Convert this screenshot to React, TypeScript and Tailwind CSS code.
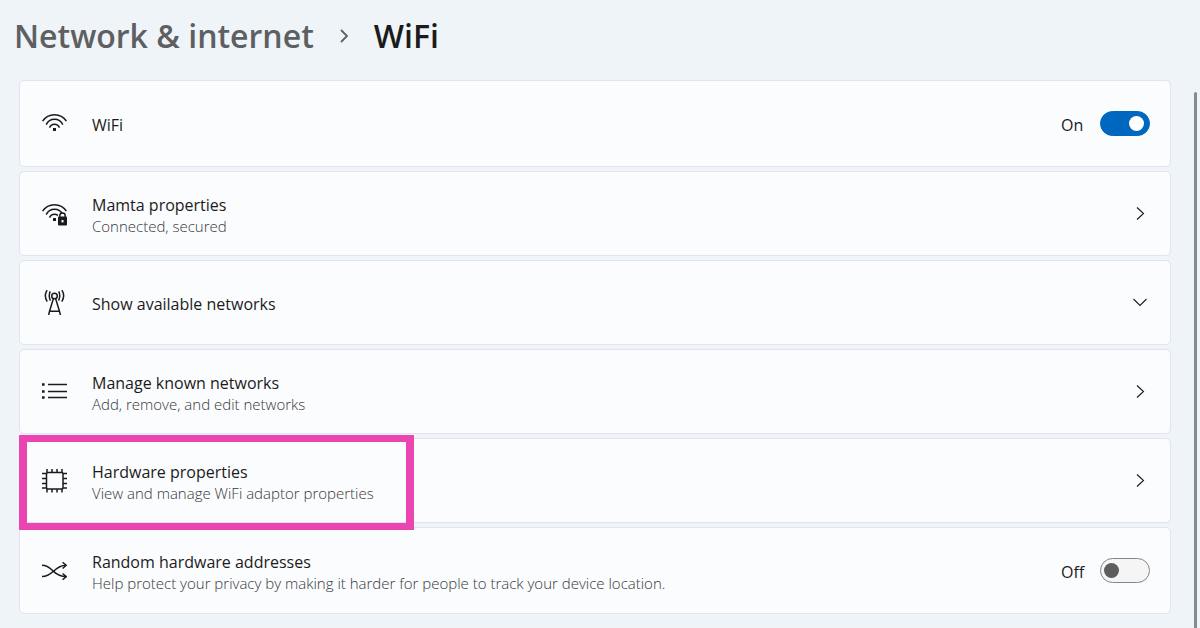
import React from 'react'
import type { ReactNode } from 'react'

const cardClass =
  'relative flex w-full items-center rounded-[5px] border border-[#e1e4eb] bg-[#fbfcfe] pl-[22px] pr-5 text-left'

function Icon({ children }: { children: ReactNode }) {
  return (
    <svg
      className="h-[25px] w-[25px] shrink-0"
      viewBox="0 0 25 25"
      fill="none"
      stroke="#1b1b1b"
      strokeWidth="1.5"
      aria-hidden="true"
    >
      {children}
    </svg>
  )
}

function WifiArcs() {
  return (
    <>
      <path d="M.6 10.2A14.2 14.2 0 0 1 24.4 10.2" />
      <path d="M4.2 13.6A9.2 9.2 0 0 1 20.8 13.6" />
      <path d="M7.5 16.6A5.4 5.4 0 0 1 17.5 16.6" />
      <rect x="11" y="17" width="3" height="3" fill="#1b1b1b" stroke="none" />
    </>
  )
}

function WifiIcon() {
  return (
    <Icon>
      <WifiArcs />
    </Icon>
  )
}

function WifiLockIcon() {
  return (
    <Icon>
      <WifiArcs />
      <path d="M15 25V16.5L17 12.5H23L25 16.5V25Z" fill="#fbfcfe" stroke="none" />
      <path d="M17.8 16V14.8A2.7 2.7 0 0 1 23.2 14.8V16" />
      <rect x="16" y="15.5" width="9" height="9" rx="1" fill="#1b1b1b" stroke="none" />
      <rect x="19.5" y="19" width="2" height="2.4" fill="#fbfcfe" stroke="none" />
    </Icon>
  )
}

function TowerIcon() {
  return (
    <Icon>
      <circle cx="12.5" cy="6" r="2.8" />
      <path d="M11.4 8.6L7.6 21L6.6 25M13.6 8.6L17.4 21L18.4 25M7.4 21.2H17.6" />
      <path d="M8.2 1.4Q6.2 6 8.4 10.6M16.8 1.4Q18.8 6 16.6 10.6" />
      <path d="M5.1.2Q1.5 5.8 5.2 11.6M19.9.2Q23.5 5.8 19.8 11.6" />
    </Icon>
  )
}

function ListIcon() {
  return (
    <Icon>
      <path d="M6 5.5H25M6 12.5H25M6 18.5H25" />
      <path d="M0 5.5H2.6M0 12.5H2.6M0 18.5H2.6" strokeWidth="2.4" />
    </Icon>
  )
}

function ChipIcon() {
  return (
    <Icon>
      <rect x="4.5" y="4.5" width="16.5" height="16.5" rx="1.5" />
      <path d="M5 4.5V1M10 4.5V1M15 4.5V1M20 4.5V1M5 21V24.5M10 21V24.5M15 21V24.5M20 21V24.5" />
      <path d="M4.5 5.5H0M4.5 10.5H0M4.5 15.5H0M4.5 20H0M21 5.5H25M21 10.5H25M21 15.5H25M21 20H25" />
    </Icon>
  )
}

function ShuffleIcon() {
  return (
    <Icon>
      <path d="M0 7.3C6 7.3 8.5 10.6 11.5 13.4S18 18.6 24 18.6" />
      <path d="M0 18.6C6 18.6 8.5 16 11.5 13.2S18 7.3 24 7.3" />
      <path d="M20.6 4.2L24.2 7.3L20.6 10.5M20.6 15.5L24.2 18.6L20.6 21.8" />
    </Icon>
  )
}

function Chevron({ down = false }: { down?: boolean }) {
  return (
    <svg
      className="h-5 w-5 shrink-0"
      viewBox="0 0 20 20"
      fill="none"
      stroke="#1b1b1b"
      strokeWidth="1.1"
      aria-hidden="true"
    >
      <path d={down ? 'M3.5 6L10 12.5L16.5 6' : 'M7 3.5L13.5 9.5L7 15.5'} />
    </svg>
  )
}

function RowText({ title, detail }: { title: string; detail?: string }) {
  return (
    <span className="ml-[25px] flex flex-1 flex-col pt-[3px]">
      <span className="text-[16px] leading-[22px] text-[#1b1b1b]">{title}</span>
      {detail && <span className="text-[15px] font-light leading-[21px] text-[#36383a]">{detail}</span>}
    </span>
  )
}

type LinkRowProps = { icon: ReactNode; title: string; detail: string; highlighted?: boolean }

function LinkRow({ icon, title, detail, highlighted }: LinkRowProps) {
  return (
    <a href="#" className={`${cardClass} min-h-[85px]`}>
      {icon}
      <RowText title={title} detail={detail} />
      <Chevron />
      {highlighted && (
        <span className="absolute -bottom-2 -left-px -top-1 z-10 w-[395px] border-x-8 border-y-[7px] border-[#eb45b1]" />
      )}
    </a>
  )
}

type ToggleRowProps = { icon: ReactNode; title: string; detail?: string; on: boolean }

function ToggleRow({ icon, title, detail, on }: ToggleRowProps) {
  return (
    <label className={`${cardClass} min-h-[87px]`}>
      {icon}
      <RowText title={title} detail={detail} />
      <span className="w-[39px] pt-[3px] text-[16px] leading-[22px] text-[#1b1b1b]">{on ? 'On' : 'Off'}</span>
      <input
        type="checkbox"
        role="switch"
        defaultChecked={on}
        className="flex h-[25px] w-[50px] shrink-0 appearance-none items-center rounded-full border border-[#868686] bg-[#f5f5f6] px-[3px] before:h-[15px] before:w-[15px] before:rounded-full before:bg-[#5d5d5d] before:content-[''] checked:justify-end checked:border-[#0067c0] checked:bg-[#0067c0] checked:px-[5px] checked:before:bg-white"
      />
    </label>
  )
}

function App() {
  return (
    <div className="flex min-h-screen bg-[#eff4f9] pr-[3px] font-['Open_Sans','Noto_Sans',sans-serif]">
      <main className="flex-1 pl-[19px] pr-[23px]">
        <nav className="-ml-[5px] flex h-20 items-center pb-2 text-[32px] font-semibold leading-[46px]">
          <a href="#" className="text-[#5d5f62]">
            Network &amp; internet
          </a>
          <svg className="mx-[21px] h-[18px] w-[18px]" viewBox="0 0 18 18" fill="none" stroke="#5d5f62" strokeWidth="1.8">
            <path d="M6 3L12 9L6 15" />
          </svg>
          <h1 className="text-[#1b1b1b]">WiFi</h1>
        </nav>
        <div className="flex flex-col gap-1">
          <ToggleRow icon={<WifiIcon />} title="WiFi" on />
          <LinkRow icon={<WifiLockIcon />} title="Mamta properties" detail="Connected, secured" />
          <button type="button" className={`${cardClass} min-h-[85px]`}>
            <TowerIcon />
            <RowText title="Show available networks" />
            <Chevron down />
          </button>
          <LinkRow icon={<ListIcon />} title="Manage known networks" detail="Add, remove, and edit networks" />
          <LinkRow
            icon={<ChipIcon />}
            title="Hardware properties"
            detail="View and manage WiFi adaptor properties"
            highlighted
          />
          <ToggleRow
            icon={<ShuffleIcon />}
            title="Random hardware addresses"
            detail="Help protect your privacy by making it harder for people to track your device location."
            on={false}
          />
        </div>
      </main>
      <div className="mt-[92px] w-[3px] rounded-t-full bg-[#868a8e]" />
    </div>
  )
}

export default App
